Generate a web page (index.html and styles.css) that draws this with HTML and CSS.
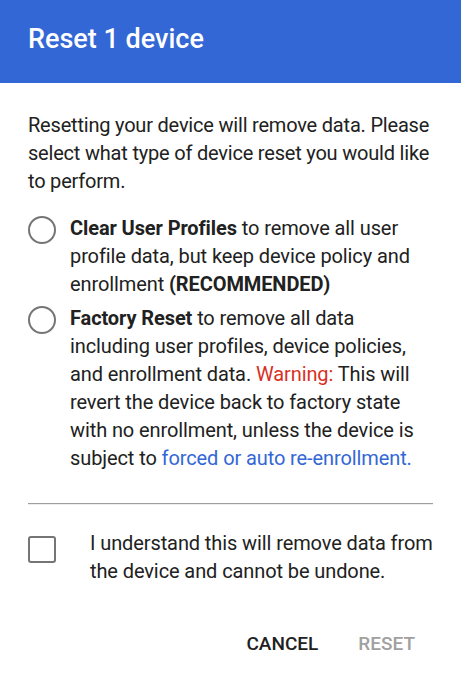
FILE: index.html
```html
<!DOCTYPE html>
<html>
<head>
<meta charset="utf-8">
<link rel="stylesheet" href="styles.css">
</head>
<body>
<div class="dialog">
  <header class="header"><h1 class="title">Reset 1 device</h1></header>
  <div class="content">
    <p class="intro">Resetting your device will remove data. Please select what type of device reset you would like to perform.</p>
    <div class="option opt1">
      <span class="radio"></span>
      <div class="opt-text"><b>Clear User Profiles</b> to remove all user profile data, but keep device policy and enrollment <b>(RECOMMENDED)</b></div>
    </div>
    <div class="option opt2">
      <span class="radio"></span>
      <div class="opt-text"><b>Factory Reset</b> to remove all data including user profiles, device policies, and enrollment data. <span class="warn">Warning:</span> This will revert the device back to factory state with no enrollment, unless the device is subject to <a class="link">forced or auto re-enrollment.</a></div>
    </div>
    <div class="divider"></div>
    <div class="confirm">
      <span class="checkbox"></span>
      <div class="confirm-text">I understand this will remove data from the device and cannot be undone.</div>
    </div>
    <div class="actions">
      <span class="btn cancel">CANCEL</span>
      <span class="btn reset">RESET</span>
    </div>
  </div>
</div>
</body>
</html>
```
FILE: styles.css
```css
html, body { margin: 0; padding: 0; background: #fff; }
body { font-family: Roboto, "Liberation Sans", sans-serif; color: #212121; font-size: 20px; line-height: 28px; letter-spacing: -0.1px; }
.header { background: #3367d6; height: 83px; box-sizing: border-box; padding: 21px 28px 0; }
.title { margin: 0; font-size: 27px; font-weight: 500; color: #fff; line-height: 36px; letter-spacing: 0; }
.content { padding: 28px 28px 0; }
.intro { margin: 0 -4px 19px 0; letter-spacing: -0.2px; }
.option { display: flex; gap: 14px; align-items: flex-start; }
.opt2 { margin-top: 6px; }
.radio { flex: none; width: 24px; height: 24px; border: 2px solid #757575; border-radius: 50%; margin-top: 2px; }
.opt-text b { font-weight: 700; }
.warn { color: #d93025; }
.link { color: #3367d6; text-decoration: none; }
.divider { margin-top: 31px; border-top: 1px solid #9e9e9e; border-bottom: 1px solid #eeeeee; }
.confirm { display: flex; gap: 34px; margin-top: 24px; align-items: flex-start; }
.checkbox { flex: none; width: 24px; height: 23px; border: 2px solid #757575; border-radius: 3px; margin-top: 7px; }
.actions { display: flex; justify-content: flex-end; gap: 40px; margin-top: 45px; padding-right: 18px; }
.btn { font-weight: 500; font-size: 19px; letter-spacing: 0; }
.cancel { color: #212121; }
.reset { color: #a0a0a0; }
```
